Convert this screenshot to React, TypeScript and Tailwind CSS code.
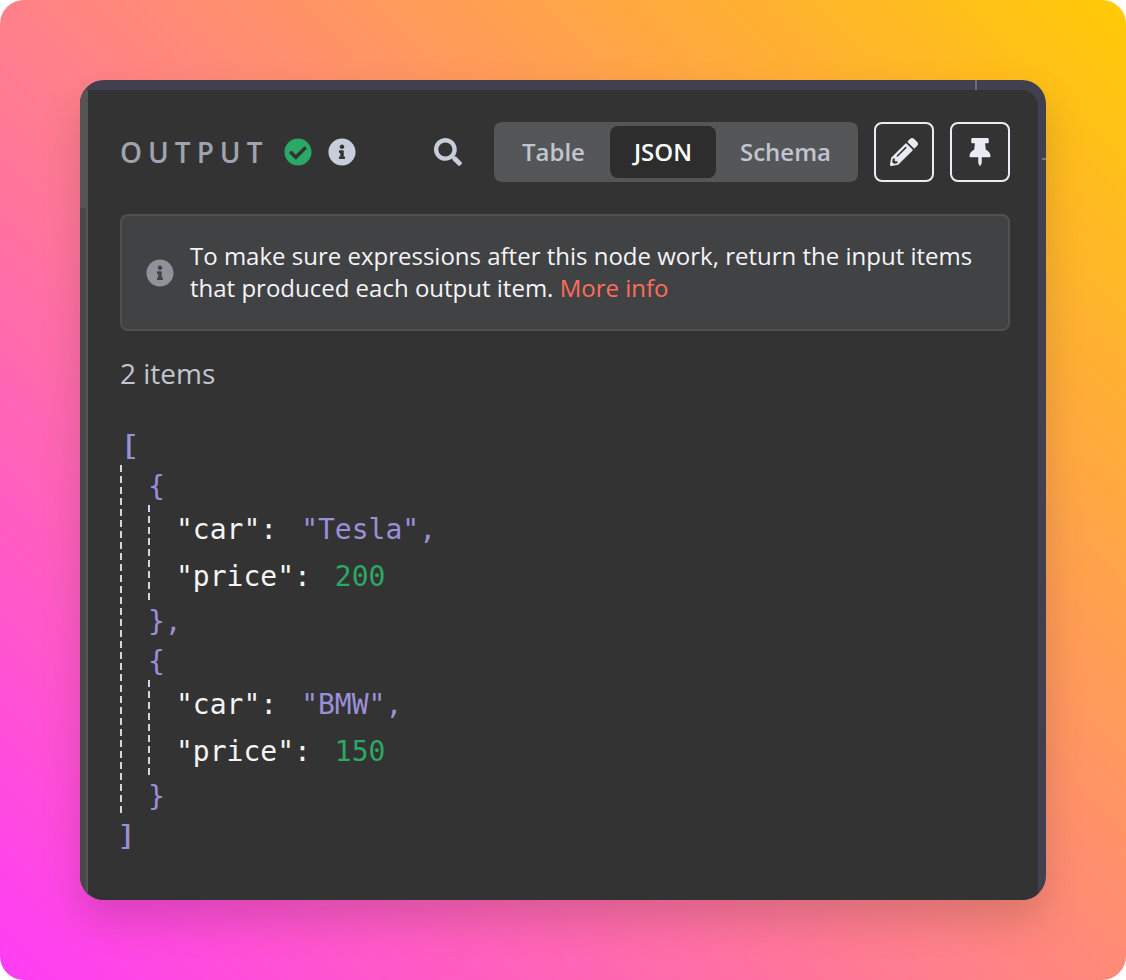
import { ReactNode } from "react";
import { FaCheckCircle, FaInfoCircle, FaPencilAlt, FaSearch, FaThumbtack } from "react-icons/fa";

const sans = "font-['Open_Sans',sans-serif]";
const mono = "font-['DejaVu_Sans_Mono',monospace]";
const dash = "absolute w-[2px] bg-[repeating-linear-gradient(to_bottom,#d0d6e2_0,#d0d6e2_7px,transparent_7px,transparent_11px)]";

function Row({ className, children }: { className: string; children: ReactNode }) {
	return <div className={`h-[44px] leading-[44px] whitespace-pre ${className}`}>{children}</div>;
}

export default function App() {
	return (
		<div className="bg-white">
			<div className="w-[1126px] h-[980px] rounded-[24px] p-[80px] bg-[linear-gradient(45deg,#ff3cf6_0%,#ff7f8c_45%,#ffa04f_70%,#ffcb05_100%)]">
				<div className="relative w-[966px] h-[820px] rounded-[24px] overflow-hidden bg-[#42404f] pt-[10px] pr-[8px] shadow-[0_20px_40px_rgba(0,0,0,0.15)]">
					<div className="absolute left-[895px] top-0 h-[10px] w-[2px] bg-[#6b6b75]" />
					<div className="absolute right-0 top-[78px] h-[2px] w-[4px] bg-[#77777f]" />
					<div className="absolute left-0 top-[10px] h-[118px] w-[8px] bg-[#555555]" />
					<div className="absolute left-[6px] top-[128px] bottom-0 w-[2px] bg-[#555555]" />
					<div className={`h-full rounded-tr-[16px] bg-[#333333] border-l-[8px] border-[#484848] pl-[32px] pr-[28px] pt-[32px] ${sans}`}>
						<div className="flex items-center h-[60px]">
							<div className="w-[164px] text-[28px] font-semibold tracking-[6px] text-[#9ea3af] leading-none">OUTPUT</div>
							<FaCheckCircle className="text-[#2ba863]" size={28} />
							<FaInfoCircle className="ml-[16px] text-[#c8ced9]" size={28} />
							<FaSearch className="ml-[78px] text-[#c8ced9]" size={28} />
							<div className="ml-[32px] flex h-[60px] w-[364px] items-center rounded-[8px] bg-[#555658] pl-[28px] text-[24px] font-[570] text-[#c0c5d0]">
								<span>Table</span>
								<span className="ml-[25px] flex h-[52px] w-[106px] items-center justify-center rounded-[8px] bg-[#2d2d2d] text-white">JSON</span>
								<span className="ml-[24px]">Schema</span>
							</div>
							<button className="ml-[16px] flex h-[60px] w-[60px] items-center justify-center rounded-[8px] border-2 border-[#e9ebf5] text-[#e9ebf5]">
								<FaPencilAlt size={28} />
							</button>
							<button className="ml-[16px] flex h-[60px] w-[60px] items-center justify-center rounded-[8px] border-2 border-[#e9ebf5] text-[#e9ebf5]">
								<FaThumbtack size={28} />
							</button>
						</div>
						<div className="mt-[32px] flex h-[117px] items-center rounded-[8px] border-2 border-[#505050] bg-[#414244] pl-[24px]">
							<FaInfoCircle className="text-[#8f9299] shrink-0" size={28} />
							<p className="ml-[16px] pb-[2px] text-[24px] leading-[32px] text-[#f4f4f6]">
								To make sure expressions after this node work, return the input items
								<br />
								that produced each output item. <span className="text-[#ff6d5a]">More info</span>
							</p>
						</div>
						<div className="mt-[24px] text-[28px] leading-[36px] text-[#c0c5d0]">2 items</div>
						<div className={`relative mt-[34px] text-[28px] text-[#f4f4f6] ${mono}`}>
							<div className={`${dash} left-0 top-[40px] h-[350px]`} />
							<div className={`${dash} left-[28px] top-[80px] h-[95px]`} />
							<div className={`${dash} left-[28px] top-[255px] h-[95px]`} />
							<Row className=""><span className="inline-block origin-left scale-x-[1.3] -ml-[1px] text-[#9a90d8]">[</span></Row>
							<Row className="-mt-[4px] pl-[28px]"><span className="text-[#9a90d8]">{"{"}</span></Row>
							<Row className="-mt-[1px] pl-[56px]">"car":<span className="ml-[24px] text-[#9a90d8]">"Tesla",</span></Row>
							<Row className="mt-[3px] pl-[56px]">"price":<span className="ml-[24px] text-[#2ba863]">200</span></Row>
							<Row className="mt-[1px] pl-[28px]"><span className="text-[#9a90d8]">{"},"}</span></Row>
							<Row className="-mt-[4px] pl-[28px]"><span className="text-[#9a90d8]">{"{"}</span></Row>
							<Row className="-mt-[1px] pl-[56px]">"car":<span className="ml-[24px] text-[#9a90d8]">"BMW",</span></Row>
							<Row className="mt-[3px] pl-[56px]">"price":<span className="ml-[24px] text-[#2ba863]">150</span></Row>
							<Row className="mt-[1px] pl-[28px]"><span className="text-[#9a90d8]">{"}"}</span></Row>
							<Row className="-mt-[4px]"><span className="inline-block origin-left scale-x-[1.25] -ml-[4px] text-[#9a90d8]">]</span></Row>
						</div>
					</div>
				</div>
			</div>
		</div>
	);
}
